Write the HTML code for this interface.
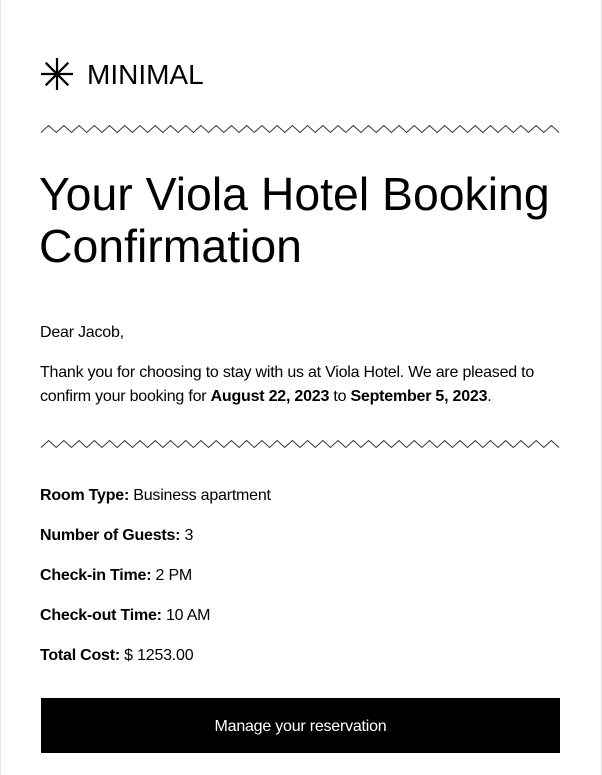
<!DOCTYPE html>
<html><head><meta charset="utf-8"><style>
html,body{margin:0;padding:0;background:#fff}
body{width:602px;height:775px;overflow:hidden;position:relative;font-family:"Liberation Sans",Arial,sans-serif;color:#000}
.frame{position:absolute;left:0;top:0;width:600px;height:775px;border-left:1px solid #e6e6e6;border-right:1px solid #e6e6e6}
.abs{position:absolute;white-space:nowrap}
.t{font-size:16px;line-height:24px;letter-spacing:-0.22px}
b{font-weight:bold}
</style></head><body>
<div class="frame"></div>
<svg class="abs" style="left:40px;top:57px" width="34" height="34" viewBox="0 0 34 34" stroke="#000" stroke-width="2.2" fill="none">
<line x1="17" y1="1" x2="17" y2="33"/><line x1="1" y1="17" x2="33" y2="17"/>
<line x1="5.7" y1="5.7" x2="28.3" y2="28.3"/><line x1="28.3" y1="5.7" x2="5.7" y2="28.3"/>
</svg>
<div class="abs" style="left:87px;top:57px;font-size:28px;line-height:36px">MINIMAL</div>
<svg class="abs" style="left:40px;top:124px" width="521" height="10" viewBox="0 0 521 10">
<polyline id="z" fill="none" stroke="#333" stroke-width="1" points=""/>
</svg>
<div class="abs" style="left:39px;top:168px;font-size:46.4px;line-height:52px">Your Viola Hotel Booking<br>Confirmation</div>
<div class="abs t" style="left:40px;top:321px">Dear Jacob,</div>
<div class="abs t" style="left:40px;top:361px">Thank you for choosing to stay with us at Viola Hotel. We are pleased to<br>confirm your booking for <b>August 22, 2023</b> to <b>September 5, 2023</b>.</div>
<svg class="abs" style="left:40px;top:439px" width="521" height="10" viewBox="0 0 521 10">
<polyline id="z2" fill="none" stroke="#333" stroke-width="1" points=""/>
</svg>
<div class="abs t" style="left:40px;top:484px"><b>Room Type:</b> Business apartment</div>
<div class="abs t" style="left:40px;top:524px"><b>Number of Guests:</b> 3</div>
<div class="abs t" style="left:40px;top:564px"><b>Check-in Time:</b> 2 PM</div>
<div class="abs t" style="left:40px;top:604px"><b>Check-out Time:</b> 10 AM</div>
<div class="abs t" style="left:40px;top:644px"><b>Total Cost:</b> $ 1253.00</div>
<div class="abs" style="left:41px;top:698px;width:519px;height:55px;background:#000;color:#fff;font-size:16px;letter-spacing:-0.22px;line-height:57px;text-align:center">Manage your reservation</div>
<script>
var p=[],n=68;for(var i=0;i<=n;i++){p.push((1+i*518/n).toFixed(2)+","+(i%2?1.5:8.5));}
document.getElementById('z').setAttribute('points',p.join(' '));
document.getElementById('z2').setAttribute('points',p.join(' '));
</script>
</body></html>
